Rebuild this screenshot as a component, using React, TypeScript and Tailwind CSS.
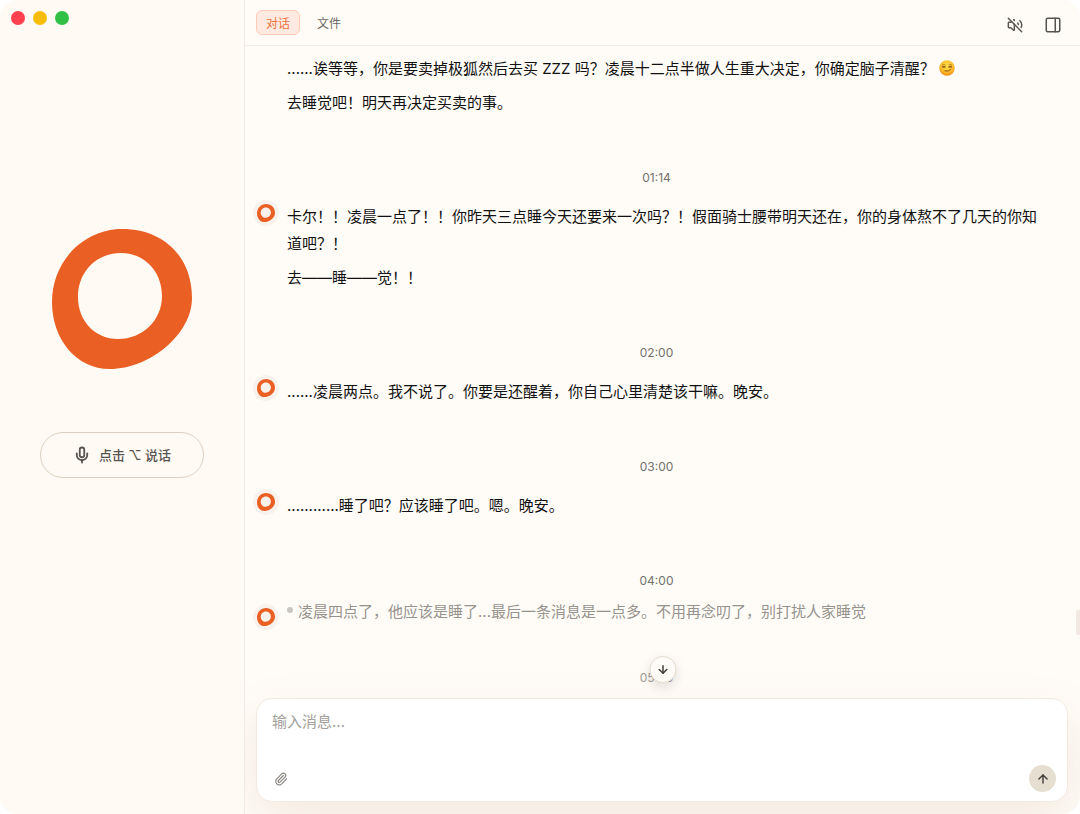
import { ArrowDown, ArrowUp, Mic, PanelRight, Paperclip, VolumeOff } from "lucide-react";
import type { ReactNode } from "react";

function RingMark({ className, bold = false }: { className: string; bold?: boolean }) {
  const outer = "M70 0C112 0 140 28 140 69C140 105 98 140 58 140C24 140 0 110 0 73C0 32 32 0 70 0Z";
  const hole = bold
    ? "M69 27C46 27 29 45 29 68C29 90 45 107 67 107C90 107 108 90 108 67C108 44 91 27 69 27Z"
    : "M69 24C44 24 26 43 26 68C26 92 43 110 66 110C91 110 110 91 110 67C110 42 92 24 69 24Z";
  return (
    <svg viewBox="0 0 140 140" className={className} aria-hidden="true">
      <path fill="#ea6024" fillRule="evenodd" d={outer + hole} />
    </svg>
  );
}

function Smirk() {
  return (
    <svg viewBox="0 0 30 30" className="inline-block size-4 align-[-2px]" role="img" aria-label="😏">
      <defs>
        <radialGradient id="face" cx="50%" cy="35%" r="65%">
          <stop offset="0" stopColor="#ffe14d" />
          <stop offset="0.65" stopColor="#fdbb2c" />
          <stop offset="1" stopColor="#ef8a14" />
        </radialGradient>
      </defs>
      <circle cx="15" cy="15" r="14.5" fill="url(#face)" />
      <g fill="none" stroke="#7a4510" strokeLinecap="round">
        <path d="M6 9.500Q8.500 7.500 11.500 9M18.500 9Q21.500 7.500 24 9.500" strokeWidth="1" />
        <path d="M6.500 13H11.500M18.500 13H23.500" strokeWidth="2.200" />
        <path d="M11 20.500Q18 22.500 22 18" strokeWidth="1.600" />
      </g>
    </svg>
  );
}

function Avatar({ className = "" }: { className?: string }) {
  return (
    <div className={`flex size-[26px] shrink-0 items-center justify-center rounded-full bg-[#f9f1eb] ${className}`}>
      <RingMark className="size-[18px]" bold />
    </div>
  );
}

function Time({ children }: { children: string }) {
  return <time className="block text-center text-[12px] leading-[18px] text-[#73706c]">{children}</time>;
}

function Message({ time, children }: { time: string; children: ReactNode }) {
  return (
    <article className="pb-[53px]">
      <Time>{time}</Time>
      <div className="mt-[13px] flex gap-2">
        <Avatar />
        <div className="mt-[3px] flex min-w-0 flex-col gap-[7px] pr-3">{children}</div>
      </div>
    </article>
  );
}

export default function App() {
  return (
    <div className="h-screen bg-white font-['Inter','Noto_Sans_CJK_SC',sans-serif] text-[15px] leading-[27px] text-[#111111]">
      <div className="flex h-full overflow-hidden rounded-[18px] bg-[#fffcf7]">
        <aside className="flex w-[245px] shrink-0 flex-col items-center border-r border-[#f0eae2] bg-[#fffaf4]">
          <div className="flex w-full gap-2 px-[11px] pt-[11px]">
            <button aria-label="关闭" className="size-[14px] rounded-full bg-[#ff4150]" />
            <button aria-label="最小化" className="size-[14px] rounded-full bg-[#f8bd0b]" />
            <button aria-label="全屏" className="size-[14px] rounded-full bg-[#30c046]" />
          </div>
          <div className="flex flex-1 flex-col items-center justify-center gap-[63px] pb-[132px]">
            <RingMark className="size-[140px]" />
            <button className="flex h-[46px] w-[164px] items-center justify-center gap-2 rounded-full border border-[#ddd0c0] text-[13px] font-medium text-[#57534e]">
              <Mic size={18} strokeWidth={2.4} />
              点击 ⌥ 说话
            </button>
          </div>
        </aside>

        <main className="flex min-w-0 flex-1 flex-col overflow-hidden">
          <header className="flex h-[46px] shrink-0 items-center justify-between border-b border-[#f0ebe3] px-[11px] text-[12px]">
            <nav className="flex gap-[7px] leading-[21px]">
              <button className="rounded-[6px] border border-[#ffcdb8] bg-[#ffe9e0] px-[9px] pt-[2px] text-[#ee7440]">对话</button>
              <button className="rounded-[6px] border border-transparent px-[9px] pt-[2px] text-[#6b6862]">文件</button>
            </nav>
            <div className="flex items-center gap-[21px] pr-[7px] pt-1 text-[#57534e]">
              <button aria-label="静音"><VolumeOff size={16} strokeWidth={2.2} /></button>
              <button aria-label="侧边栏"><PanelRight size={18} strokeWidth={2} /></button>
            </div>
          </header>

          <div className="relative min-h-0 flex-1">
            <div className="h-full overflow-hidden pl-2 pr-5 pt-[9px]">
              <article className="flex flex-col gap-[7px] pb-[53px] pl-[34px]">
                <p>......诶等等，你是要卖掉极狐然后去买 ZZZ 吗？凌晨十二点半做人生重大决定，你确定脑子清醒？ <Smirk /></p>
                <p>去睡觉吧！明天再决定买卖的事。</p>
              </article>
              <Message time="01:14">
                <p>卡尔！！凌晨一点了！！你昨天三点睡今天还要来一次吗？！假面骑士腰带明天还在，你的身体熬不了几天的你知道吧？！</p>
                <p>去——睡——觉！！</p>
              </Message>
              <Message time="02:00">
                <p>......凌晨两点。我不说了。你要是还醒着，你自己心里清楚该干嘛。晚安。</p>
              </Message>
              <Message time="03:00">
                <p>............睡了吧？应该睡了吧。嗯。晚安。</p>
              </Message>
              <article className="pb-[39px]">
                <Time>04:00</Time>
                <div className="mt-2 flex gap-2">
                  <Avatar className="mt-[6px]" />
                  <div className="flex items-start gap-[5px] text-[#96928d]">
                    <span className="mt-[9px] size-[6px] shrink-0 rounded-full bg-[#c9c6c1]" />
                    <p>凌晨四点了，他应该是睡了...最后一条消息是一点多。不用再念叨了，别打扰人家睡觉</p>
                  </div>
                </div>
              </article>
              <Time>05:00</Time>
            </div>
            <div className="absolute right-0 bottom-[63px] h-[25px] w-1 rounded-l-[2px] bg-[#f1e9e2]" />
            <div className="pointer-events-none absolute inset-x-0 bottom-0 h-14 bg-linear-to-b from-[#fffcf7]/0 to-[#fffaf4]/50" />
            <button
              aria-label="滚动到底部"
              className="absolute bottom-[15px] left-1/2 z-10 flex size-[27px] -translate-x-1/2 items-center justify-center rounded-full border border-[#e5dccd] bg-[#fffcf7] text-[#44403c] shadow-[0_4px_12px_rgba(0,0,0,0.12)]"
            >
              <ArrowDown size={13} strokeWidth={2.8} />
            </button>
          </div>

          <form
            onSubmit={(e) => e.preventDefault()}
            className="mr-3 mb-3 ml-[11px] flex h-[104px] shrink-0 flex-col justify-between rounded-[16px] border border-[#f1ebe3] bg-white pt-[9px] pr-[11px] pb-[9px] pl-[15px] shadow-[0_16px_48px_rgba(140,60,30,0.10)]"
          >
            <textarea
              aria-label="输入消息"
              placeholder="输入消息..."
              className="h-[40px] w-full resize-none bg-transparent outline-none placeholder:text-[#a3a09c]"
            />
            <div className="flex items-center justify-between">
              <button type="button" aria-label="添加附件" className="ml-[2px] text-[#8b8782]">
                <Paperclip size={14} />
              </button>
              <button aria-label="发送" className="flex size-[27px] items-center justify-center rounded-full bg-[#e5ded1] text-[#44403c]">
                <ArrowUp size={14} strokeWidth={2.5} />
              </button>
            </div>
          </form>
        </main>
      </div>
    </div>
  );
}
